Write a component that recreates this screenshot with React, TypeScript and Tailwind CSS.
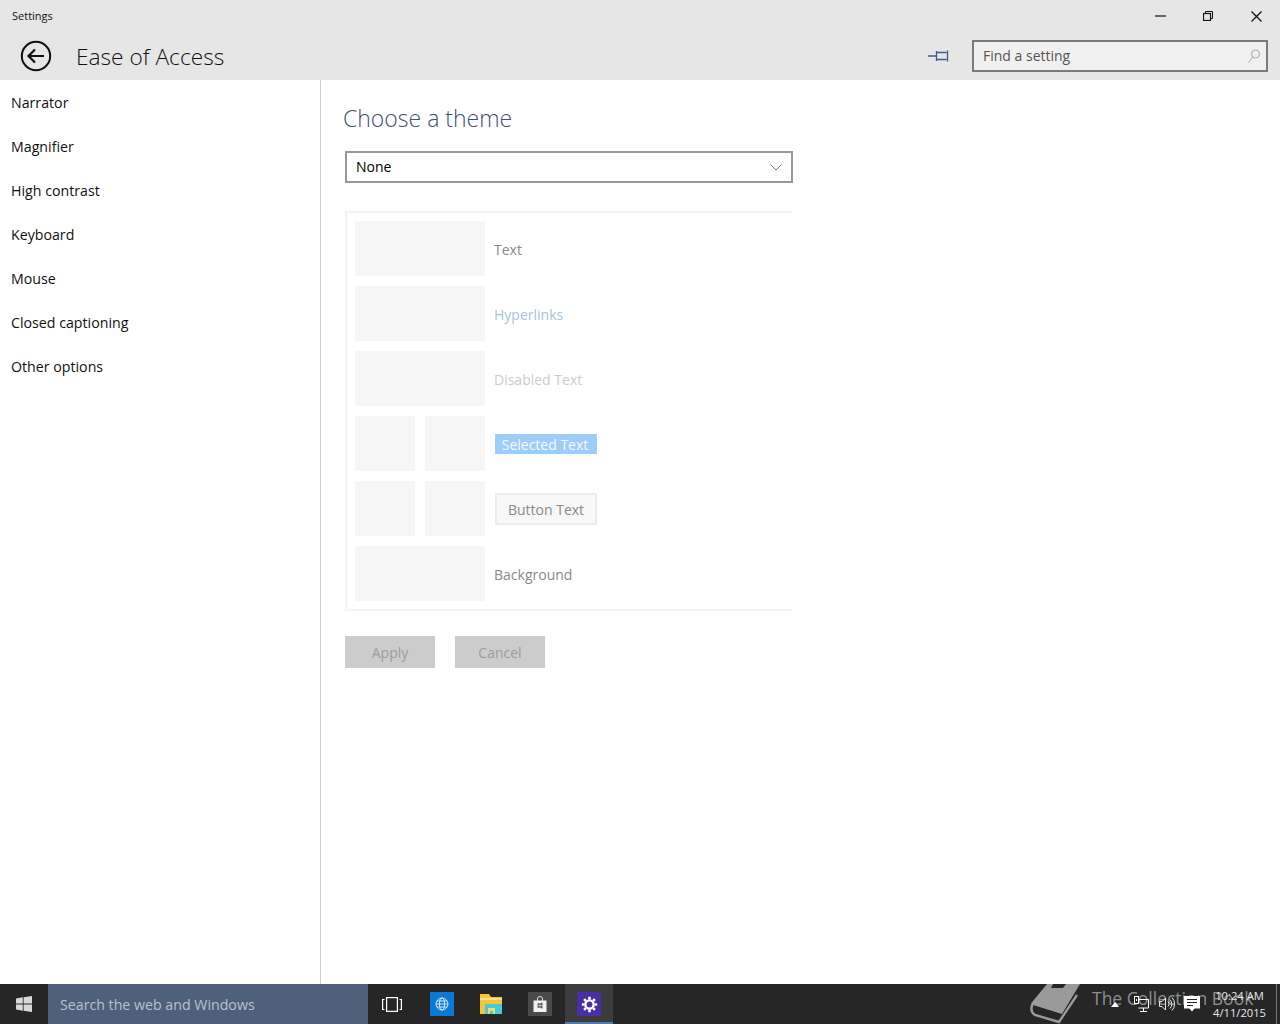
const font = { fontFamily: '"Open Sans", "Noto Sans", sans-serif' };

const navItems = ['Narrator', 'Magnifier', 'High contrast', 'Keyboard', 'Mouse', 'Closed captioning', 'Other options'];

function Swatch({ small }: { small?: boolean }) {
  return <div className={`${small ? 'w-[60px]' : 'w-[130px]'} h-[55px] bg-[#f6f6f6]`} />;
}

function PreviewRow({ split, children }: { split?: boolean; children: React.ReactNode }) {
  return (
    <div className="flex items-center h-[55px]">
      {split ? (
        <div className="flex gap-[10px] w-[130px]">
          <Swatch small />
          <Swatch small />
        </div>
      ) : (
        <Swatch />
      )}
      {children}
    </div>
  );
}

function BackIcon() {
  return (
    <svg width="32" height="32" viewBox="0 0 32 32" fill="none" stroke="#111" strokeWidth="2">
      <circle cx="16" cy="16" r="14.2" />
      <path d="M24 16H9M15 9.5L8.5 16l6.5 6.5" strokeWidth="2.2" />
    </svg>
  );
}

function MinimizeIcon() {
  return (
    <svg width="11" height="2" viewBox="0 0 11 2" fill="none" stroke="#111" strokeWidth="1.2">
      <path d="M0 1h11" />
    </svg>
  );
}

function RestoreIcon() {
  return (
    <svg width="10" height="10" viewBox="0 0 10 10" fill="none" stroke="#111" strokeWidth="1">
      <rect x="0.5" y="2.5" width="7" height="7" strokeWidth="1.2" />
      <path d="M2.5 2.5v-2h7v7h-2" />
    </svg>
  );
}

function CloseIcon() {
  return (
    <svg width="11" height="11" viewBox="0 0 11 11" fill="none" stroke="#111" strokeWidth="1.3">
      <path d="M.5.5l10 10M10.5.5l-10 10" />
    </svg>
  );
}

function PinIcon() {
  return (
    <svg width="22" height="14" viewBox="0 0 22 14" fill="none" stroke="#3c5a86" strokeWidth="1.3">
      <path d="M0 7h8M8.5 2v10M9 3.5h9.5M9 10.5h9.5M19.5 1.5v11" />
    </svg>
  );
}

function SearchGlyph() {
  return (
    <svg width="12" height="14" viewBox="0 0 12 14" fill="none" stroke="#a8a8a8" strokeWidth="1">
      <circle cx="7.5" cy="5" r="4" />
      <path d="M4.8 8L.5 13.5" />
    </svg>
  );
}

function ComboChevron() {
  return (
    <svg width="12" height="7" viewBox="0 0 12 7" fill="none" stroke="#777" strokeWidth="1">
      <path d="M.5.5L6 6l5.500-5.500" />
    </svg>
  );
}

function WindowsLogo() {
  return (
    <svg width="16" height="16" viewBox="0 0 16 16" fill="#d9d9d9">
      <path d="M0 2.4L6.800 1.300v6.200H0zM7.600 1.200L16 0v7.500H7.600zM0 8.400h6.800v6.300L0 13.600zM7.600 8.400H16V16l-8.400-1.200z" />
    </svg>
  );
}

function TaskViewIcon() {
  return (
    <svg width="20" height="15" viewBox="0 0 20 15" fill="none" stroke="#fff" strokeWidth="1.2">
      <rect x="4.600" y="0.600" width="10.800" height="13.800" />
      <path d="M2.500 2.500H.6v10h1.900M17.500 2.500h1.900v10h-1.900" />
    </svg>
  );
}

function GlobeTile() {
  return (
    <div className="w-6 h-6 bg-[#0a78d7] flex items-center justify-center">
      <svg width="14" height="14" viewBox="0 0 14 14" fill="none" stroke="#d5e8fa" strokeWidth="1">
        <circle cx="7" cy="7" r="6" />
        <ellipse cx="7" cy="7" rx="2.600" ry="6" />
        <path d="M1 7h12M2 4h10M2 10h10" />
      </svg>
    </div>
  );
}

function FolderIcon() {
  return (
    <svg width="22" height="22" viewBox="0 0 22 22">
      <path d="M0 1h9l2 3h11v17H0z" fill="#f5c63c" />
      <path d="M0 5h22v2H0z" fill="#fbe07c" />
      <path d="M5 11h17v10H5z" fill="#49c9dc" />
      <path d="M8 21v-6h7v6h-2v-3h-3v3z" fill="#f5d96b" />
    </svg>
  );
}

function StoreTile() {
  return (
    <div className="w-6 h-6 bg-[#4a4a4a] flex items-center justify-center">
      <svg width="14" height="17" viewBox="0 0 14 17">
        <path d="M4.500 5V3a2.500 2.500 0 015 0v2" fill="none" stroke="#ddd" strokeWidth="1" />
        <path d="M.5 4.500h13V16H.5z" fill="#f2f2f2" />
        <path d="M4.500 7.500l2.200-.4v2.200H4.500zM7.300 7l2.200-.4v2.700H7.300zM4.500 9.800h2.200V12l-2.200-.4zM7.300 9.800h2.200v2.700l-2.200-.4z" fill="#555" />
      </svg>
    </div>
  );
}

function GearTile() {
  return (
    <div className="w-6 h-6 bg-[#4b2ea6] flex items-center justify-center">
      <svg width="17" height="17" viewBox="0 0 16 16" fill="none" stroke="#fff">
        <circle cx="8" cy="8" r="3.900" strokeWidth="2.300" />
        <path
          d="M8 0.800v2.400M8 12.800v2.400M0.800 8h2.400M12.800 8h2.400M2.900 2.900l1.700 1.700M11.400 11.400l1.700 1.700M2.900 13.100l1.700-1.700M11.400 4.600l1.700-1.700"
          strokeWidth="2.400"
        />
      </svg>
    </div>
  );
}

function BookMark() {
  return (
    <svg width="52" height="40" viewBox="0 0 52 40" fill="none">
      <path d="M17 0L3 17Q0 20 3 21L32 30 50 0z" fill="#9a9a9a" />
      <path d="M23 0h13l-3 4H21z" fill="#262626" />
      <path d="M3 19Q-1 27 5 31L29 38 47 11" stroke="#9a9a9a" strokeWidth="2.400" />
    </svg>
  );
}

function NetworkIcon() {
  return (
    <svg width="15" height="16" viewBox="0 0 15 16" fill="none" stroke="#fff" strokeWidth="1">
      <path d="M4.500 3.500h10v8.500h-10M9.500 12v3M6 15.500h7" />
      <rect x="0.500" y="0.500" width="4" height="7" fill="#262626" />
      <path d="M2.500 3v2" />
    </svg>
  );
}

function SpeakerIcon() {
  return (
    <svg width="17" height="16" viewBox="0 0 17 16" fill="none" stroke="#e8e8e8" strokeWidth="1">
      <path d="M.5 5.500h2.500L6.500 2v12L3 10.500H.5z" />
      <path d="M9 5.500a3.500 3.500 0 010 5M11 3.500a6.500 6.500 0 010 9M13 1.500a9.500 9.500 0 010 13" />
    </svg>
  );
}

function ActionCenterIcon() {
  return (
    <svg width="16" height="16" viewBox="0 0 16 16">
      <path d="M0 0h16v12.500h-5.500L8 15.500l-2.500-3H0z" fill="#fff" />
      <path d="M3 3.500h10M3 6.500h10M3 9.500h6" stroke="#262626" strokeWidth="1" />
    </svg>
  );
}

export default function App() {
  return (
    <div className="w-[1280px] h-[1024px] flex flex-col overflow-hidden bg-white" style={font}>
      {/* Title bar + page header */}
      <header className="h-20 bg-[#e6e6e6] flex flex-col shrink-0">
        <div className="h-8 flex items-center justify-between">
          <span className="pl-3 text-[11px] text-[#111]">Settings</span>
          <div className="flex items-center">
            <div className="w-12 flex justify-center"><MinimizeIcon /></div>
            <div className="w-12 flex justify-center"><RestoreIcon /></div>
            <div className="w-12 flex justify-center"><CloseIcon /></div>
          </div>
        </div>
        <div className="h-12 flex items-center pl-5">
          <BackIcon />
          <h1 className="ml-[24px] pt-[2px] text-[22.7px] font-light text-[#111]">Ease of Access</h1>
          <div className="ml-auto mr-[22px]"><PinIcon /></div>
          <div className="mr-3 w-[296px] h-8 border-2 border-[#7a7a7a] bg-[#f0f0f0] flex items-center justify-between pl-[9px] pr-[6px]">
            <span className="pb-[2px] text-[14px] text-[#555]">Find a setting</span>
            <SearchGlyph />
          </div>
        </div>
      </header>

      <main className="flex-1 flex min-h-0">
        {/* Nav */}
        <nav className="w-[321px] shrink-0 border-r border-[#cfcfcf] pt-[1px]">
          {navItems.map((item) => (
            <div key={item} className="h-11 pl-[11px] flex items-center text-[14.2px] text-[#111]">
              {item}
            </div>
          ))}
        </nav>

        {/* Content */}
        <section className="pl-[24px] pt-[20px]">
          <h2 className="text-[23px] leading-[36px] font-light text-[#3c5275] -ml-[2px]">Choose a theme</h2>
          <div className="mt-[15px] w-[448px] h-8 border-2 border-[#999] flex items-center justify-between pl-[9px] pr-[9px]">
            <span className="pb-[2px] text-[14px] text-black">None</span>
            <ComboChevron />
          </div>

          <div className="mt-7 w-[447px] border-2 border-r-0 border-[#f4f4f4] p-2 flex flex-col gap-[10px]">
            <PreviewRow>
              <span className="ml-[9px] pt-[2px] text-[14px] text-[#8a8a8a]">Text</span>
            </PreviewRow>
            <PreviewRow>
              <span className="ml-[9px] pt-[2px] text-[14px] text-[#a3c4e4]">Hyperlinks</span>
            </PreviewRow>
            <PreviewRow>
              <span className="ml-[9px] pt-[2px] text-[14px] text-[#cccccc]">Disabled Text</span>
            </PreviewRow>
            <PreviewRow split>
              <span className="ml-[10px] w-[102px] h-5 pt-[2px] pr-[2px] bg-[#9dcdfb] text-[14px] text-[#f5faff] flex items-center justify-center">
                Selected Text
              </span>
            </PreviewRow>
            <PreviewRow split>
              <span className="ml-[10px] w-[102px] h-8 pt-[2px] border-2 border-[#ececec] bg-[#f8f8f8] text-[14px] text-[#8a8a8a] flex items-center justify-center">
                Button Text
              </span>
            </PreviewRow>
            <PreviewRow>
              <span className="ml-[9px] pt-[2px] text-[14px] text-[#8a8a8a]">Background</span>
            </PreviewRow>
          </div>

          <div className="mt-[25px] flex gap-5">
            <button className="w-[90px] h-8 bg-[#cccccc] text-[14px] text-[#9c9c9c]">Apply</button>
            <button className="w-[90px] h-8 bg-[#cccccc] text-[14px] text-[#9c9c9c]">Cancel</button>
          </div>
        </section>
      </main>

      {/* Taskbar */}
      <footer className="relative h-10 bg-[#262626] flex items-center shrink-0 overflow-hidden">
        <div className="w-12 flex justify-center"><WindowsLogo /></div>
        <div className="w-80 h-10 bg-[#4f607a] flex items-center pl-3 pt-[2px] text-[14.2px] text-[#b9c1cd]">
          Search the web and Windows
        </div>
        <div className="w-12 flex justify-center"><TaskViewIcon /></div>
        <div className="w-[50px] ml-[1px] flex justify-center"><GlobeTile /></div>
        <div className="w-[48px] flex justify-center"><FolderIcon /></div>
        <div className="w-[50px] flex justify-center"><StoreTile /></div>
        <div className="w-12 h-10 bg-[#3c3c3c] border-b-2 border-[#4f7bb0] flex justify-center items-center pt-[2px]"><GearTile /></div>

        {/* Desktop watermark showing through */}
        <div className="absolute left-[1030px] top-0"><BookMark /></div>
        <span className="absolute left-[1092px] top-0 text-[17.5px] leading-[28px] text-[#8e8e8e] whitespace-nowrap">The Collection Book</span>

        <div className="ml-auto relative flex items-center h-10 pr-[14px]">
          <svg width="8" height="5" viewBox="0 0 8 5" className="mr-[15px]"><path d="M4 0l4 5H0z" fill="#fff" /></svg>
          <div className="mr-[10px]"><NetworkIcon /></div>
          <div className="mr-[8px]"><SpeakerIcon /></div>
          <div className="mr-[13px]"><ActionCenterIcon /></div>
          <div className="flex flex-col items-center text-[11.2px] leading-[17px] text-[#e8e8e8]">
            <span>10:24 AM</span>
            <span>4/11/2015</span>
          </div>
        </div>
        <div className="absolute right-[3px] top-0 h-10 w-px bg-[#777]" />
      </footer>
    </div>
  );
}
